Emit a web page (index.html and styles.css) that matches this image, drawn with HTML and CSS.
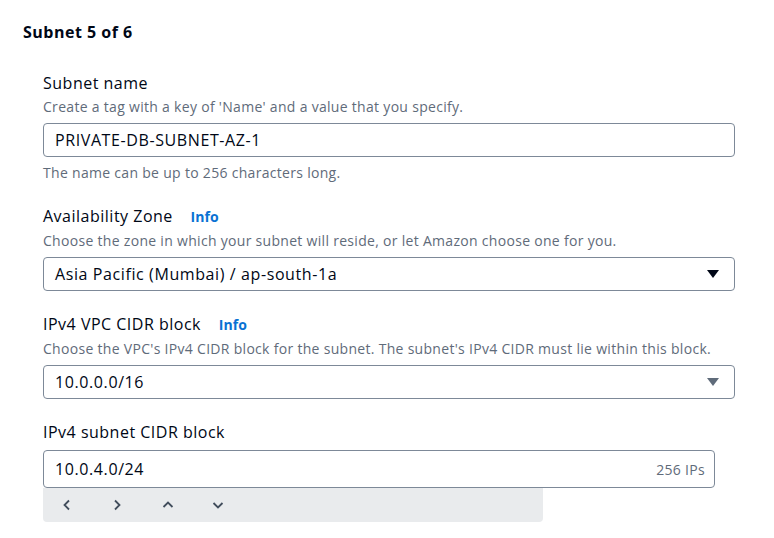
FILE: index.html
```html
<!DOCTYPE html>
<html>
<head>
<meta charset="utf-8">
<link rel="stylesheet" href="styles.css">
</head>
<body>
<div class="page">
  <h2 class="heading">Subnet 5 of 6</h2>
  <div class="fields">
    <div class="field">
      <div class="label">Subnet name</div>
      <div class="desc">Create a tag with a key of 'Name' and a value that you specify.</div>
      <div class="box input">PRIVATE-DB-SUBNET-AZ-1</div>
      <div class="desc helper">The name can be up to 256 characters long.</div>
    </div>
    <div class="field">
      <div class="label">Availability Zone <span class="info">Info</span></div>
      <div class="desc">Choose the zone in which your subnet will reside, or let Amazon choose one for you.</div>
      <div class="box select">
        <span>Asia Pacific (Mumbai) / ap-south-1a</span>
        <svg class="caret" width="14" height="10" viewBox="0 0 14 10"><path d="M1 1h12L7 9z" fill="#000716"/></svg>
      </div>
    </div>
    <div class="field">
      <div class="label">IPv4 VPC CIDR block <span class="info">Info</span></div>
      <div class="desc">Choose the VPC's IPv4 CIDR block for the subnet. The subnet's IPv4 CIDR must lie within this block.</div>
      <div class="box select">
        <span>10.0.0.0/16</span>
        <svg class="caret" width="14" height="10" viewBox="0 0 14 10"><path d="M1 1h12L7 9z" fill="#5f6b7a"/></svg>
      </div>
    </div>
    <div class="field">
      <div class="label label-tight">IPv4 subnet CIDR block</div>
      <div class="box cidr">
        <span>10.0.4.0/24</span>
        <span class="count">256 IPs</span>
      </div>
      <div class="stepper">
        <svg width="10" height="12" viewBox="0 0 10 12"><path d="M7 1.5L2.5 6 7 10.5" fill="none" stroke="#414d5c" stroke-width="1.8"/></svg>
        <svg width="10" height="12" viewBox="0 0 10 12"><path d="M3 1.5L7.5 6 3 10.5" fill="none" stroke="#414d5c" stroke-width="1.8"/></svg>
        <svg width="12" height="10" viewBox="0 0 12 10"><path d="M1.5 7L6 2.5 10.5 7" fill="none" stroke="#414d5c" stroke-width="1.8"/></svg>
        <svg width="12" height="10" viewBox="0 0 12 10"><path d="M1.5 3L6 7.5 10.5 3" fill="none" stroke="#414d5c" stroke-width="1.8"/></svg>
      </div>
    </div>
  </div>
</div>
</body>
</html>
```

FILE: styles.css
```css
* { box-sizing: border-box; }
html, body { margin: 0; padding: 0; background: #ffffff; }
body {
  font-family: "Open Sans", "Noto Sans", sans-serif;
  color: #000716;
}
.page {
  padding: 21px 39px 0 23px;
}
.heading {
  margin: 0;
  font-size: 16px;
  line-height: 22px;
  font-weight: 700;
  letter-spacing: 0.5px;
}
.fields {
  padding-left: 20px;
  padding-top: 29px;
  display: flex;
  flex-direction: column;
  gap: 22px;
}
.label {
  font-size: 16px;
  line-height: 22px;
  margin-bottom: 3px;
  letter-spacing: 0.5px;
}
.label-tight { margin-bottom: 7px; }
.info {
  font-size: 14px;
  font-weight: 700;
  color: #0972d3;
  margin-left: 13px;
  letter-spacing: 0.1px;
}
.desc {
  font-size: 14px;
  line-height: 20px;
  color: #5f6b7a;
  margin-bottom: 6px;
  letter-spacing: 0.3px;
}
.helper { margin: 6px 0 0; }
.box {
  border: 1px solid #7d8998;
  border-radius: 4px;
  height: 34px;
  padding: 0 11px;
  display: flex;
  align-items: center;
  font-size: 16px;
  letter-spacing: 0.6px;
}
.select { justify-content: space-between; padding-right: 14px; }
.caret { display: block; }
.cidr {
  width: 672px;
  height: 38px;
  justify-content: space-between;
  padding-right: 9px;
}
.count {
  font-size: 14px;
  color: #5f6b7a;
  letter-spacing: 0.3px;
}
.stepper {
  width: 500px;
  height: 34px;
  background: #e9ebed;
  border-radius: 0 0 4px 4px;
  display: flex;
  align-items: center;
  padding-left: 19px;
}
.stepper svg { display: block; margin-right: 40px; }
.stepper svg:nth-child(3), .stepper svg:nth-child(4) { margin-right: 38px; }
```
